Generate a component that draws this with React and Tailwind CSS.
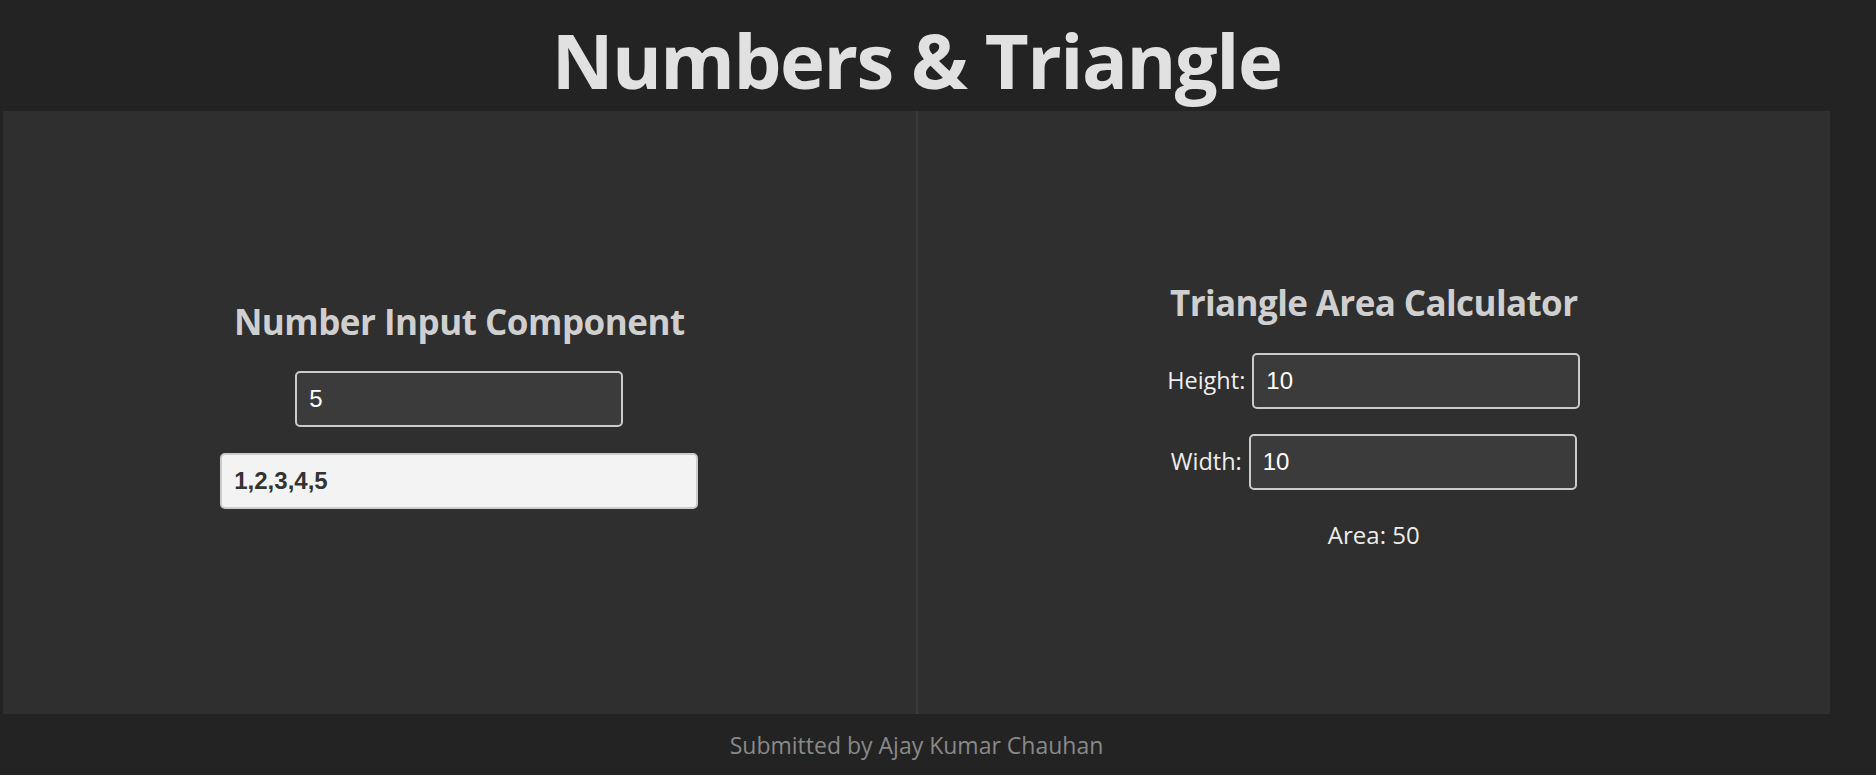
import { useState } from 'react';

const inputBase =
  "h-[56px] rounded-[5px] border-2 border-[#cbcbcb] px-[12px] font-['Liberation_Sans',Arial,sans-serif] text-[24px] outline-none";

function NumberInputPanel() {
  const [count, setCount] = useState('5');
  const n = parseInt(count, 10);
  const sequence = n > 0 ? Array.from({ length: Math.min(n, 200) }, (_, i) => i + 1).join(',') : '';

  return (
    <section className="flex flex-1 flex-col items-center justify-center border-r-2 border-[#3a3a3a] pb-[16px]">
      <h2 className="text-[35px] leading-[44px] font-bold tracking-[-0.5px] text-[#cfcfcf]">Number Input Component</h2>
      <input
        type="text"
        value={count}
        onChange={(event) => setCount(event.target.value)}
        className={`${inputBase} mt-[27px] w-[328px] bg-[#3b3b3b] text-white`}
      />
      <input
        type="text"
        readOnly
        value={sequence}
        className={`${inputBase} mt-[26px] w-[478px] bg-[#f3f3f3] font-bold text-[#333]`}
      />
    </section>
  );
}

function TriangleAreaPanel() {
  const [height, setHeight] = useState('10');
  const [width, setWidth] = useState('10');
  const area = 0.5 * (parseFloat(height) || 0) * (parseFloat(width) || 0);

  return (
    <section className="flex flex-1 flex-col items-center justify-center pt-[7px]">
      <h2 className="text-[35px] leading-[44px] font-bold tracking-[-0.6px] text-[#cfcfcf]">Triangle Area Calculator</h2>
      <label className="mt-[28px] flex items-center gap-[7px] text-[23.5px] text-[#ededed]">
        <span>Height:</span>
        <input
          type="text"
          value={height}
          onChange={(event) => setHeight(event.target.value)}
          className={`${inputBase} w-[328px] bg-[#3b3b3b] text-white`}
        />
      </label>
      <label className="mt-[25px] flex items-center gap-[7px] text-[23.5px] text-[#ededed]">
        <span>Width:</span>
        <input
          type="text"
          value={width}
          onChange={(event) => setWidth(event.target.value)}
          className={`${inputBase} w-[328px] bg-[#3b3b3b] text-white`}
        />
      </label>
      <p className="mt-[29px] text-[24px] leading-[32px] text-[#ededed]">Area: {area}</p>
    </section>
  );
}

export default function App() {
  return (
    <div className="min-h-screen bg-[#232323] font-['Open_Sans','Noto_Sans',sans-serif]">
      <div className="w-[1833px]">
        <h1 className="h-[111px] pt-[9px] text-center text-[76px] leading-[102px] font-bold tracking-[-1.5px] text-[#e1e1e1]">
          Numbers &amp; Triangle
        </h1>
        <main className="mx-[3px] flex h-[603px] bg-[#2f2f2f]">
          <NumberInputPanel />
          <TriangleAreaPanel />
        </main>
        <footer className="flex h-[61px] items-center justify-center pt-[2px] text-[23px] text-[#898989]">
          Submitted by Ajay Kumar Chauhan
        </footer>
      </div>
    </div>
  );
}
